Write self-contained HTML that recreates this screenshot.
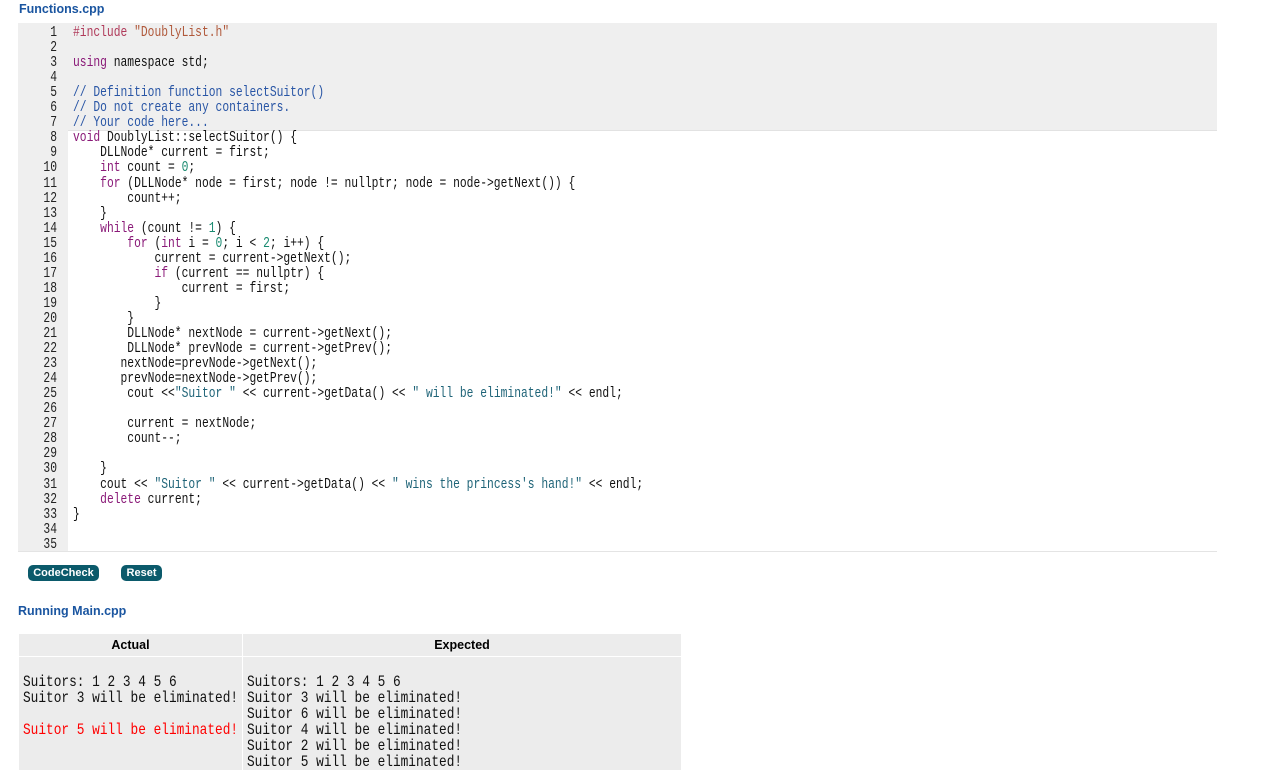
<!DOCTYPE html>
<html><head><meta charset="utf-8"><style>
body{margin:0;background:#fff;font-family:"Liberation Sans",sans-serif;overflow:hidden}
.t{position:absolute;color:#1a55a0;font-weight:bold;font-size:12.5px;}
.ed{position:absolute;left:18px;top:23px;width:1199px;height:528px;border-bottom:1px solid #e4e4e4;background:#fff;}
.gut{position:absolute;left:0;top:0;width:50px;height:528px;background:#efefef;}
.ro{position:absolute;left:50px;top:0;width:1149px;height:107px;background:#efefef;border-bottom:1px solid #e2e2e2}
.ln{position:absolute;left:0;width:39px;text-align:right;font-family:"Liberation Mono",monospace;font-size:14.5px;line-height:15px;color:#222;transform:scaleX(.78);transform-origin:right;}
.cd{position:absolute;left:55px;white-space:pre;font-family:"Liberation Mono",monospace;font-size:14.5px;line-height:15px;color:#111;transform:scaleX(.78);transform-origin:left;}
.k{color:#8a1a78}.c{color:#2855a5}.s{color:#1f6478}.n{color:#198a70}.p{color:#b03a5a}.o{color:#b0583a}
.btn{position:absolute;top:565px;height:16px;background:#0b5a6b;color:#fff;font-weight:bold;font-size:11px;line-height:16px;border-radius:5px;text-align:center}
table{position:absolute;left:18px;top:633px;border-collapse:collapse;width:664px;table-layout:fixed}
th{background:#ececec;font-size:12.5px;height:22px;border:1px solid #fff;font-weight:bold;padding:0}
td{background:#ececec;border:1px solid #fff;vertical-align:top;padding:0;overflow:visible}
.o2{font-family:"Liberation Mono",monospace;font-size:16px;line-height:16px;white-space:pre;transform:scaleX(.8);transform-origin:left;margin:17px 0 0 4px;color:#111}
</style></head><body>
<div class="t" style="left:19px;top:2px">Functions.cpp</div>
<div class="ed"><div class="gut"></div><div class="ro"></div>
<div id="L"></div>
</div>
<div class="btn" style="left:28px;width:71px">CodeCheck</div>
<div class="btn" style="left:121px;width:41px">Reset</div>
<div class="t" style="left:18px;top:604px">Running Main.cpp</div>
<table><tr><th style="width:223px">Actual</th><th>Expected</th></tr>
<tr><td style="height:110px"><div class="o2">Suitors: 1 2 3 4 5 6
Suitor 3 will be eliminated!

<span style="color:#f00">Suitor 5 will be eliminated!</span></div></td>
<td><div class="o2">Suitors: 1 2 3 4 5 6
Suitor 3 will be eliminated!
Suitor 6 will be eliminated!
Suitor 4 will be eliminated!
Suitor 2 will be eliminated!
Suitor 5 will be eliminated!</div></td></tr></table>
<script>
var lines=[
'<span class="p">#include</span> <span class="o">"DoublyList.h"</span>','',
'<span class="k">using</span> namespace std;','',
'<span class="c">// Definition function selectSuitor()</span>',
'<span class="c">// Do not create any containers.</span>',
'<span class="c">// Your code here...</span>',
'<span class="k">void</span> DoublyList::selectSuitor() {',
'    DLLNode* current = first;',
'    <span class="k">int</span> count = <span class="n">0</span>;',
'    <span class="k">for</span> (DLLNode* node = first; node != nullptr; node = node-&gt;getNext()) {',
'        count++;',
'    }',
'    <span class="k">while</span> (count != <span class="n">1</span>) {',
'        <span class="k">for</span> (<span class="k">int</span> i = <span class="n">0</span>; i &lt; <span class="n">2</span>; i++) {',
'            current = current-&gt;getNext();',
'            <span class="k">if</span> (current == nullptr) {',
'                current = first;',
'            }',
'        }',
'        DLLNode* nextNode = current-&gt;getNext();',
'        DLLNode* prevNode = current-&gt;getPrev();',
'       nextNode=prevNode-&gt;getNext();',
'       prevNode=nextNode-&gt;getPrev();',
'        cout &lt;&lt;<span class="s">"Suitor "</span> &lt;&lt; current-&gt;getData() &lt;&lt; <span class="s">" will be eliminated!"</span> &lt;&lt; endl;',
'',
'        current = nextNode;',
'        count--;',
'',
'    }',
'    cout &lt;&lt; <span class="s">"Suitor "</span> &lt;&lt; current-&gt;getData() &lt;&lt; <span class="s">" wins the princess\'s hand!"</span> &lt;&lt; endl;',
'    <span class="k">delete</span> current;',
'}','',''];
var h='';
for(var i=0;i<lines.length;i++){var y=3+i*15.05;
h+='<div class="ln" style="top:'+y+'px">'+(i+1)+'</div><div class="cd" style="top:'+y+'px">'+lines[i]+'</div>';}
document.getElementById('L').innerHTML=h;
</script>
</body></html>
